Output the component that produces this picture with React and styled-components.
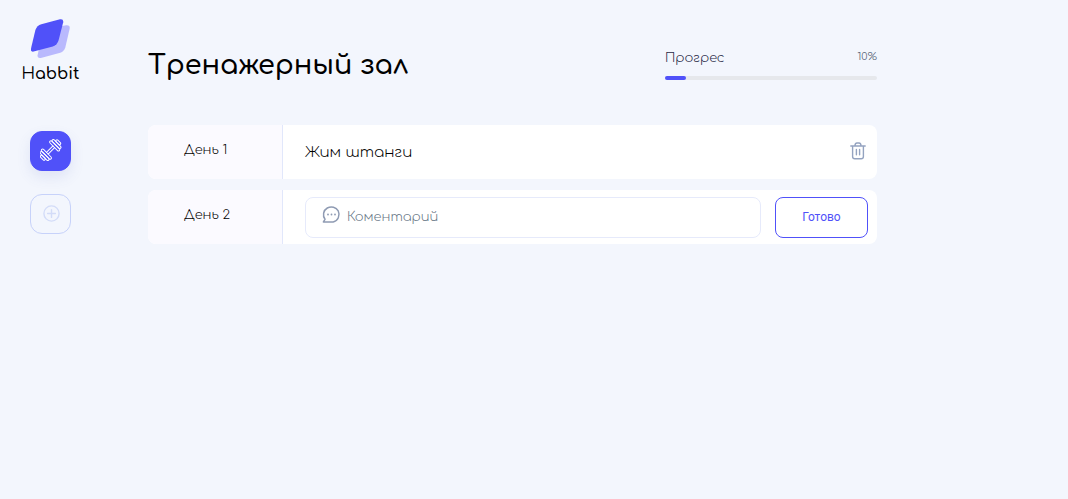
import React from "react";
import styled, { createGlobalStyle } from "styled-components";

const GlobalStyle = createGlobalStyle`
  *, *::before, *::after { box-sizing: border-box; }
  body {
    margin: 0;
    background: #f3f6fd;
    color: #000;
    font-family: Comfortaa, Inter, "Open Sans", sans-serif;
  }
  button, input { font: inherit; }
  h1, p { margin: 0; }
`;

const Page = styled.div`
  display: flex;
  min-height: 100vh;
`;

const Sidebar = styled.aside`
  flex: none;
  display: flex;
  flex-direction: column;
  align-items: center;
  width: 101px;
  padding-top: 19px;
`;

const Logo = styled.a`
  display: flex;
  flex-direction: column;
  align-items: center;
  gap: 5px;
  color: #000;
  font-size: 16px;
  font-weight: 400;
  line-height: 20px;
  text-decoration: none;
`;

const LogoTail = styled.span`
  font-weight: 600;
`;

const Menu = styled.nav`
  display: flex;
  flex-direction: column;
  gap: 23px;
  margin-top: 47px;
`;

const MenuButton = styled.button`
  display: flex;
  align-items: center;
  justify-content: center;
  width: 41px;
  height: 40px;
  padding: 0 0 2px;
  border: 1px solid ${(p) => (p.$active ? "#5051f9" : "#c7d2fa")};
  border-radius: 12px;
  background: ${(p) => (p.$active ? "#5051f9" : "transparent")};
  color: ${(p) => (p.$active ? "#fff" : "#d3dcf8")};
  box-shadow: ${(p) => (p.$active ? "0 6px 14px rgba(80, 100, 190, 0.12)" : "none")};
  cursor: pointer;
`;

const Main = styled.main`
  flex: 1;
  min-width: 0;
  max-width: 776px;
  padding: 45px 0 24px 47px;
`;

const Header = styled.header`
  display: flex;
  justify-content: space-between;
  align-items: flex-start;
  min-height: 80px;
`;

const Title = styled.h1`
  font-size: 27px;
  font-weight: 600;
  line-height: 40px;
`;

const Progress = styled.div`
  width: 212px;
  padding-top: 3px;
`;

const ProgressText = styled.div`
  display: flex;
  justify-content: space-between;
  color: #1f2744;
  font-size: 13px;
  font-weight: 300;
  line-height: 20px;
`;

const Percent = styled.span`
  color: #4f5a70;
  font-size: 11px;
  line-height: 18px;
`;

const Bar = styled.div`
  height: 4px;
  margin-top: 8px;
  border-radius: 4px;
  background: #e6e8ec;
`;

const BarFill = styled.div`
  height: 4px;
  border-radius: 4px;
  background: #5051f9;
`;

const Days = styled.section`
  display: flex;
  flex-direction: column;
  gap: 11px;
`;

const DayRow = styled.div`
  display: flex;
  min-height: 54px;
  overflow: hidden;
  border-radius: 8px;
  background: #fff;
`;

const DayName = styled.div`
  flex: none;
  width: 135px;
  padding: 15px 12px 0 36px;
  border-right: 1px solid #e1e7fb;
  background: #fbfaff;
  font-size: 13px;
  font-weight: 300;
  line-height: 20px;
`;

const DayBody = styled.div`
  flex: 1;
  display: flex;
  align-items: center;
  justify-content: space-between;
  gap: 14px;
  min-width: 0;
  padding: 0 9px 0 22px;
`;

const Comment = styled.p`
  font-size: 15px;
  font-weight: 300;
  line-height: 22px;
  padding-top: 2px;
`;

const DeleteButton = styled.button`
  display: flex;
  padding: 0 2px 3px;
  border: 0;
  background: none;
  color: #94a3c0;
  cursor: pointer;
`;

const CommentField = styled.label`
  flex: 1;
  display: flex;
  align-items: center;
  gap: 7px;
  height: 41px;
  min-width: 0;
  padding: 0 16px;
  border: 1px solid #e6eafb;
  border-radius: 8px;
  color: #8f9bb3;
`;

const CommentInput = styled.input`
  flex: 1;
  min-width: 0;
  padding: 0;
  border: 0;
  outline: 0;
  background: none;
  color: #000;
  font-size: 13px;
  font-weight: 300;
  line-height: 20px;
  &::placeholder { color: #667584; opacity: 1; }
`;

const DoneButton = styled.button`
  flex: none;
  width: 93px;
  height: 41px;
  padding: 0;
  border: 1px solid #5051f9;
  border-radius: 8px;
  background: #fff;
  color: #5051f9;
  font-family: Roboto, sans-serif;
  font-size: 12px;
  line-height: 16px;
  cursor: pointer;
`;

const LogoMark = () => (
  <svg width="40" height="40" viewBox="1 0 40 40" aria-hidden="true">
    <path d="M12.5 13 Q13.8 10.6 16.5 9.8 L36.2 6.3 Q40.2 6 39.7 9.5 L35.3 28.5 Q34 32.5 30.3 33.8 L10.8 39 Q7.3 39.6 7.6 36.3Z" fill="#b9b9fd" />
    <path d="M5.4 11 Q7 6.5 11.3 5.2 L30 0.3 Q33.7 -0.3 33.2 3.2 L28.6 21.2 Q27.2 26 22.8 27.4 L3.6 32.6 Q0.3 33.2 1 29.6Z" fill="#5051f9" />
  </svg>
);

const Dumbbell = () => (
  <svg width="22" height="22" viewBox="0 -0.5 24 24" fill="none" stroke="currentColor" strokeWidth="1.1" strokeLinecap="round" strokeLinejoin="round" aria-hidden="true">
    <g transform="rotate(-45 11.5 11.5)">
      <path d="M6.5 10.2 H16.5 M6.5 12.8 H16.5" />
      <rect x="3.7" y="4.3" width="2.8" height="14.4" rx="1.4" />
      <rect x="0.9" y="5.2" width="2.8" height="12.6" rx="1.4" />
      <rect x="-1.7" y="8.3" width="2.6" height="6.4" rx="1.3" />
      <rect x="16.5" y="4.3" width="2.8" height="14.4" rx="1.4" />
      <rect x="19.3" y="5.2" width="2.8" height="12.6" rx="1.4" />
      <rect x="22.1" y="8.3" width="2.6" height="6.4" rx="1.3" />
    </g>
  </svg>
);

const PlusCircle = () => (
  <svg width="18" height="17" viewBox="-1 0 18 17" fill="none" stroke="currentColor" strokeWidth="1.4" strokeLinecap="round" aria-hidden="true">
    <circle cx="8.5" cy="8.5" r="7.6" />
    <path d="M8.5 4.6 V12.4 M4.6 8.5 H12.4" />
  </svg>
);

const Trash = () => (
  <svg width="16" height="18" viewBox="0 0 16 18" fill="none" stroke="currentColor" strokeWidth="1.4" strokeLinecap="round" strokeLinejoin="round" aria-hidden="true">
    <path d="M0.8 4 H15.2 M2.6 4 V14.6 Q2.6 16.8 4.8 16.8 H11.2 Q13.4 16.8 13.4 14.6 V4 M5 3.8 Q5 1 7 1 H9 Q11 1 11 3.8" />
    <path d="M6.4 7.4 V12.8 M9.6 7.4 V12.8" />
  </svg>
);

const Bubble = () => (
  <svg width="18" height="20" viewBox="0 1 18 20" fill="none" stroke="currentColor" strokeWidth="1.5" strokeLinejoin="round" aria-hidden="true" overflow="visible">
    <path d="M1.4 15.9 L3 13.3 C0.3 9.6 1.3 4.2 5.3 2 C9.3 -0.1 14.2 1.1 16.2 4.8 C18.4 9.4 16 14.9 11.2 15.9Z" />
    <g fill="currentColor" stroke="none">
      <circle cx="6" cy="8.5" r="0.9" />
      <circle cx="9.5" cy="8.5" r="0.9" />
      <circle cx="13" cy="8.5" r="0.9" />
    </g>
  </svg>
);

export default function App() {
  const progress = 10;
  return (
    <Page>
      <GlobalStyle />
      <Sidebar>
        <Logo href="#">
          <LogoMark />
          <span>
            H<LogoTail>abbit</LogoTail>
          </span>
        </Logo>
        <Menu>
          <MenuButton $active type="button" aria-label="Тренажерный зал">
            <Dumbbell />
          </MenuButton>
          <MenuButton type="button" aria-label="Добавить">
            <PlusCircle />
          </MenuButton>
        </Menu>
      </Sidebar>
      <Main>
        <Header>
          <Title>Тренажерный зал</Title>
          <Progress>
            <ProgressText>
              <span>Прогрес</span>
              <Percent>{progress}%</Percent>
            </ProgressText>
            <Bar>
              <BarFill style={{ width: `${progress}%` }} />
            </Bar>
          </Progress>
        </Header>
        <Days>
          <DayRow>
            <DayName>День 1</DayName>
            <DayBody>
              <Comment>Жим штанги</Comment>
              <DeleteButton type="button" aria-label="Удалить">
                <Trash />
              </DeleteButton>
            </DayBody>
          </DayRow>
          <DayRow>
            <DayName>День 2</DayName>
            <DayBody>
              <CommentField>
                <Bubble />
                <CommentInput type="text" placeholder="Коментарий" aria-label="Коментарий" />
              </CommentField>
              <DoneButton type="button">Готово</DoneButton>
            </DayBody>
          </DayRow>
        </Days>
      </Main>
    </Page>
  );
}
